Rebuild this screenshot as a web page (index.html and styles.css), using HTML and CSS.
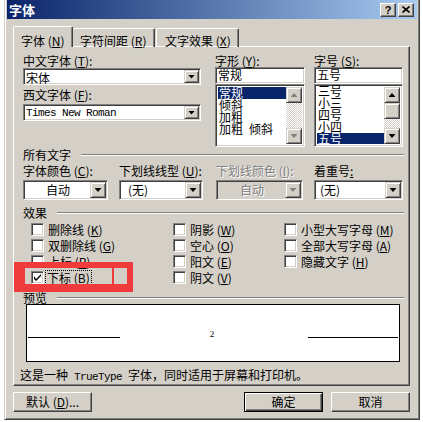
FILE: index.html
```html
<!DOCTYPE html>
<html lang="zh-CN">
<head>
    <meta charset="UTF-8" />
    <title>字体</title>
    <link rel="stylesheet" href="styles.css">
</head>
<body>
<div class="dialog">
    <div class="titlebar">
        <span class="title">字体</span>
        <span class="cap-btn help">?</span>
        <span class="cap-btn close"><svg width="8" height="7" viewBox="0 0 8 7"><path d="M0.5 0.5l7 6M7.5 0.5l-7 6" stroke="#000" stroke-width="1.6" fill="none"/></svg></span>
    </div>

    <div class="tabs">
        <div class="tab active">字体 (<u>N</u>)</div>
        <div class="tab t2">字符间距 (<u>R</u>)</div>
        <div class="tab t3">文字效果 (<u>X</u>)</div>
    </div>

    <div class="panel">
        <div class="fonts">
            <div class="col col-name">
                <div class="lbl">中文字体 (<u>T</u>):</div>
                <div class="combo small"><span class="val">宋体</span><span class="drop"></span></div>
                <div class="lbl lbl-gap">西文字体 (<u>F</u>):</div>
                <div class="combo small"><span class="val mono">Times New Roman</span><span class="drop"></span></div>
            </div>
            <div class="col col-style">
                <div class="lbl">字形 (<u>Y</u>):</div>
                <div class="edit">常规</div>
                <div class="list">
                    <ul class="items">
                        <li class="sel">常规</li>
                        <li>倾斜</li>
                        <li>加粗</li>
                        <li>加粗&ensp;倾斜</li>
                    </ul>
                    <div class="vscroll off">
                        <span class="sbtn up"></span>
                        <span class="track"></span>
                        <span class="sbtn down"></span>
                    </div>
                </div>
            </div>
            <div class="col col-size">
                <div class="lbl">字号 (<u>S</u>):</div>
                <div class="edit">五号</div>
                <div class="list">
                    <ul class="items scrolled">
                        <li>三号</li>
                        <li>小三</li>
                        <li>四号</li>
                        <li>小四</li>
                        <li class="sel">五号</li>
                    </ul>
                    <div class="vscroll">
                        <span class="sbtn up"></span>
                        <span class="thumb"></span>
                        <span class="track"></span>
                        <span class="sbtn down"></span>
                    </div>
                </div>
            </div>
        </div>

        <div class="group g-all"><span>所有文字</span><i></i></div>
        <div class="attrs">
            <div class="field f1">
                <div class="lbl">字体颜色 (<u>C</u>):</div>
                <div class="combo big"><span class="val center">自动</span><span class="drop"></span></div>
            </div>
            <div class="field f2">
                <div class="lbl">下划线线型 (<u>U</u>):</div>
                <div class="combo big"><span class="val pad8">(无)</span><span class="drop"></span></div>
            </div>
            <div class="field f3">
                <div class="lbl disabled">下划线颜色 (<u>I</u>):</div>
                <div class="combo big disabled"><span class="val center">自动</span><span class="drop"></span></div>
            </div>
            <div class="field f4">
                <div class="lbl">着重号<u>:</u></div>
                <div class="combo big"><span class="val pad4">(无)</span><span class="drop"></span></div>
            </div>
        </div>

        <div class="group g-fx"><span>效果</span><i></i></div>
        <div class="effects">
            <div class="chk"><span class="box"></span>删除线 (<u>K</u>)</div>
            <div class="chk"><span class="box"></span>双删除线 (<u>G</u>)</div>
            <div class="chk"><span class="box"></span>上标 (<u>P</u>)</div>
            <div class="chk"><span class="box"><svg width="7" height="7" viewBox="0 0 7 7"><path d="M0 2v3l2 2 5-5V0L2 5z" fill="#000"/></svg></span><span class="focus">下标 (<u>B</u>)</span></div>
            <div class="chk"><span class="box"></span>阴影 (<u>W</u>)</div>
            <div class="chk"><span class="box"></span>空心 (<u>O</u>)</div>
            <div class="chk"><span class="box"></span>阳文 (<u>E</u>)</div>
            <div class="chk"><span class="box"></span>阴文 (<u>V</u>)</div>
            <div class="chk"><span class="box"></span>小型大写字母 (<u>M</u>)</div>
            <div class="chk"><span class="box"></span>全部大写字母 (<u>A</u>)</div>
            <div class="chk"><span class="box"></span>隐藏文字 (<u>H</u>)</div>
        </div>

        <div class="group g-pv"><span>预览</span><i></i></div>
        <div class="preview">
            <span class="pline left"></span>
            <span class="sample">2</span>
            <span class="pline right"></span>
        </div>
        <div class="note">这是一种<span class="mono"> TrueType </span>字体，同时适用于屏幕和打印机。</div>
    </div>

    <div class="buttons">
        <div class="btn">默认 (<u>D</u>)...</div>
        <div class="spacer"></div>
        <div class="btn default">确定</div>
        <div class="btn cancel">取消</div>
    </div>
</div>

<div class="mark"><i></i></div>
</body>
</html>
```

FILE: styles.css
```css
body {
    margin: 0;
    width: 423px;
    height: 422px;
    overflow: hidden;
    background: #fff;
    font-family: "Noto Sans CJK SC", sans-serif;
    font-size: 12px;
    color: #000;
}

u {
    text-decoration: underline;
    text-underline-offset: 1px;
}

.mono {
    font-family: "Liberation Mono", "Noto Sans CJK SC", monospace;
    font-size: 11px;
    letter-spacing: -0.6px;
}

/* window frame */
.dialog {
    box-sizing: border-box;
    width: 416px;
    height: 420px;
    margin-left: 4px;
    padding: 0 2px 0 2px;
    background: #d4d0c8;
    border: 1px solid;
    border-top: 0;
    border-color: #d4d0c8 #404040 #404040 #d4d0c8;
    box-shadow: inset 1px 0 #fff, inset -1px -1px #808080;
}

.titlebar {
    height: 19px;
    display: flex;
    align-items: center;
    padding: 0 3px 0 2px;
    background: linear-gradient(to right, #0a246a, #a6caf0);
}

.title {
    flex: 1;
    color: #fff;
    font-weight: bold;
    font-size: 13px;
    line-height: 14px;
}

.cap-btn {
    box-sizing: border-box;
    width: 16px;
    height: 14px;
    margin-left: 2px;
    display: flex;
    align-items: center;
    justify-content: center;
    background: #d4d0c8;
    border: 1px solid;
    border-color: #fff #404040 #404040 #fff;
    box-shadow: inset -1px -1px #808080;
    font-family: "Liberation Sans", sans-serif;
    font-weight: bold;
    font-size: 11px;
    line-height: 12px;
}

/* tabs */
.tabs {
    display: flex;
    align-items: flex-end;
    height: 21px;
    margin: 7px 0 -1px 6px;
}

.tab {
    box-sizing: border-box;
    height: 19px;
    padding: 5px 0 0 7px;
    line-height: 14px;
    white-space: nowrap;
    border: 1px solid;
    border-bottom: 0;
    border-color: #fff #404040 #fff #fff;
    box-shadow: inset -1px 0 #808080;
    border-radius: 2px 2px 0 0;
}

.tab.active {
    position: relative;
    z-index: 1;
    width: 60px;
    height: 21px;
    padding-top: 7px;
    background: #d4d0c8;
}

.tab.t2 {
    width: 82px;
    border-left: 0;
    padding-left: 7px;
}

.tab.t3 {
    width: 83px;
    margin-left: 1px;
    padding-left: 8px;
}

.panel {
    box-sizing: border-box;
    width: 397px;
    height: 340px;
    margin-left: 6px;
    padding-top: 7px;
    border: 1px solid;
    border-color: #fff #404040 #404040 #fff;
    box-shadow: inset -1px -1px #808080;
}

.lbl {
    height: 13px;
    line-height: 13px;
    white-space: nowrap;
}

.lbl.disabled,
.combo.disabled .val {
    color: #808080;
    text-shadow: 1px 1px #fff;
}

/* top block: font name, style, size */
.fonts {
    display: flex;
    height: 93px;
    padding-left: 9px;
}

.col-name {
    width: 178px;
}

.col-style {
    width: 90px;
    margin-left: 14px;
}

.col-size {
    width: 89px;
    margin-left: 9px;
}

.lbl-gap {
    margin-top: 3px;
}

.combo,
.edit,
.list {
    box-sizing: border-box;
    background: #fff;
    border: 1px solid;
    border-color: #808080 #fff #fff #808080;
    box-shadow: inset 1px 1px #404040, inset -1px -1px #d4d0c8;
}

.combo {
    display: flex;
    padding: 2px 2px 2px 2px;
}

.combo.small {
    height: 17px;
    margin-top: 1px;
}

.combo.small + .lbl {
    margin-top: 3px;
}

.combo.small:last-child {
    margin-top: 3px;
}

.combo.big {
    height: 20px;
    margin-top: 3px;
    padding: 1px 1px 1px 2px;
}

.combo.disabled {
    background: #d4d0c8;
}

.val {
    flex: 1;
    line-height: 13px;
    white-space: nowrap;
}

.combo.big .val {
    line-height: 16px;
}

.val.center {
    text-align: center;
}

.val.pad8 {
    padding-left: 6px;
}

.val.pad4 {
    padding-left: 3px;
}

.drop,
.sbtn,
.thumb {
    box-sizing: border-box;
    display: flex;
    align-items: center;
    justify-content: center;
    background: #d4d0c8;
    border: 1px solid;
    border-color: #d4d0c8 #404040 #404040 #d4d0c8;
    box-shadow: inset 1px 1px #fff, inset -1px -1px #808080;
}

.drop {
    width: 15px;
    margin: -1px -1px -1px 0;
}

.combo.big .drop {
    width: 16px;
    margin: 0;
}

.drop::after,
.sbtn::after {
    content: "";
    width: 7px;
    height: 4px;
    background: #000;
    clip-path: polygon(0 0, 100% 0, 50% 100%);
}

.sbtn.up::after {
    clip-path: polygon(50% 0, 100% 100%, 0 100%);
}

.combo.disabled .drop::after,
.vscroll.off .sbtn::after {
    background: #808080;
}

.edit {
    height: 17px;
    padding-left: 2px;
    line-height: 13px;
}

.list {
    display: flex;
    height: 63px;
    padding: 2px;
    overflow: hidden;
}

.items {
    flex: 1;
    margin: 0;
    padding: 0;
    list-style: none;
    overflow: hidden;
}

.items.scrolled {
    margin-top: -2px;
}

.items li {
    height: 12px;
    line-height: 12px;
    padding-left: 1px;
    white-space: nowrap;
}

.items li.sel {
    background: #0a246a;
    color: #fff;
}

.vscroll {
    width: 16px;
    display: flex;
    flex-direction: column;
}

.sbtn,
.thumb {
    height: 16px;
    flex: none;
}

.track {
    flex: 1;
    background: repeating-conic-gradient(#fff 0 25%, #d4d0c8 0 50%) 0 0 / 2px 2px;
}

/* group headings */
.group {
    display: flex;
    align-items: center;
    height: 13px;
    line-height: 13px;
    padding-left: 9px;
}

.group i {
    flex: 1;
    height: 0;
    margin: 0 5px 0 10px;
    border-top: 1px solid #808080;
    border-bottom: 1px solid #fff;
}

.g-all {
    margin-top: 1px;
}

.g-fx,
.g-pv {
    margin-top: 6px;
}

/* underline / colour row */
.attrs {
    display: flex;
    margin-top: 3px;
    padding-left: 9px;
}

.f1 {
    width: 85px;
}

.f2 {
    width: 84px;
    margin-left: 11px;
}

.f3 {
    width: 87px;
    margin-left: 13px;
}

.f4 {
    width: 89px;
    margin-left: 11px;
}

/* effects */
.effects {
    display: grid;
    grid-template-columns: 142px 111px auto;
    grid-template-rows: repeat(4, 16px);
    grid-auto-flow: column;
    margin-top: 2px;
    padding-left: 17px;
}

.chk {
    display: flex;
    align-items: center;
    white-space: nowrap;
    line-height: 13px;
}

.box {
    box-sizing: border-box;
    width: 13px;
    height: 13px;
    margin-right: 4px;
    display: flex;
    align-items: center;
    justify-content: center;
    background: #fff;
    border: 1px solid;
    border-color: #808080 #fff #fff #808080;
    box-shadow: inset 1px 1px #404040, inset -1px -1px #d4d0c8;
}

.focus {
    margin-left: -2px;
    padding: 0 1px;
    outline: 1px dotted #000;
}

/* preview */
.preview {
    box-sizing: border-box;
    display: flex;
    align-items: flex-start;
    width: 374px;
    height: 58px;
    margin-left: 12px;
    padding: 32px 1px 0;
    background: #fff;
    border: 1px solid #000;
}

.pline {
    height: 1px;
    background: #000;
}

.pline.left {
    width: 92px;
}

.pline.right {
    width: 90px;
}

.sample {
    flex: 1;
    margin-top: -7px;
    padding-right: 4px;
    text-align: center;
    font-family: "Liberation Serif", serif;
    font-size: 9px;
    line-height: 8px;
}

.note {
    margin-top: 6px;
    padding-left: 6px;
    line-height: 14px;
    white-space: nowrap;
}

/* bottom buttons */
.buttons {
    display: flex;
    width: 397px;
    height: 20px;
    margin: 6px 0 0 6px;
}

.spacer {
    flex: 1;
}

.btn {
    box-sizing: border-box;
    width: 79px;
    height: 20px;
    line-height: 18px;
    text-align: center;
    white-space: nowrap;
    border: 1px solid;
    border-color: #fff #404040 #404040 #fff;
    box-shadow: inset -1px -1px #808080;
}

.btn.default {
    border-color: #000;
    box-shadow: inset 1px 1px #fff, inset -1px -1px #404040, inset -2px -2px #808080;
}

.btn.cancel {
    margin-left: 8px;
}

/* red annotation drawn over the dialog */
.mark {
    position: absolute;
    left: 14px;
    top: 262px;
    box-sizing: border-box;
    width: 119px;
    height: 30px;
    border: solid #ef3b3b;
    border-width: 6px 6px 8px 11px;
}

.mark i {
    position: absolute;
    left: 87px;
    top: 0;
    bottom: 0;
    width: 2px;
    background: #ef3b3b;
}
```
